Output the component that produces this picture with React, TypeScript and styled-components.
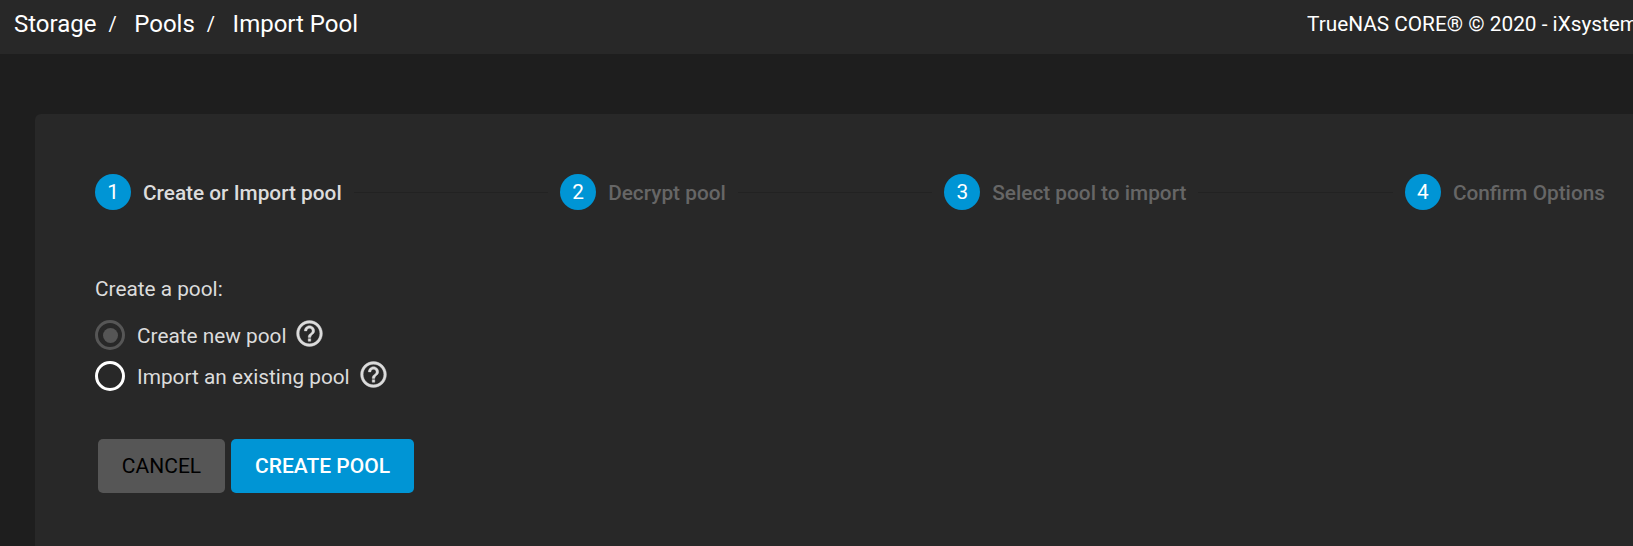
import { Fragment } from "react";
import styled, { createGlobalStyle } from "styled-components";

const GlobalStyle = createGlobalStyle`
  html, body {
    margin: 0;
    height: 100%;
    overflow: hidden;
    background: #1e1e1e;
    font-family: Roboto, "Liberation Sans", sans-serif;
  }
`;

const Page = styled.div`
  width: 1633px;
  height: 546px;
  overflow: hidden;
`;

const TopBar = styled.header`
  height: 54px;
  background: #282828;
  display: flex;
  align-items: center;
  justify-content: space-between;
  padding: 0 0 7px 14px;
  box-sizing: border-box;
  white-space: nowrap;
`;

const Crumbs = styled.nav`
  display: flex;
  align-items: center;
  color: #fff;
  font-size: 24px;
`;

const Slash = styled.span`
  font-size: 20px;
  margin: 0 17.5px 0 12px;
`;

const Copyright = styled.div`
  color: #fff;
  font-size: 20.8px;
  width: 326px;
  overflow: hidden;
`;

const Content = styled.main`
  padding: 60px 0 0 35px;
`;

const Card = styled.section`
  background: #282828;
  border-radius: 6px 0 0 0;
  height: 432px;
  padding: 60px 28px 0 60px;
  box-sizing: border-box;
`;

const Stepper = styled.div`
  display: flex;
  align-items: center;
  gap: 12px;
`;

const StepNumber = styled.div`
  width: 36px;
  height: 36px;
  border-radius: 50%;
  background: #0095d5;
  color: #fff;
  font-size: 20.8px;
  display: flex;
  align-items: center;
  justify-content: center;
  flex: none;
`;

const StepLabel = styled.div<{ $active?: boolean }>`
  font-size: 20.8px;
  font-weight: 500;
  padding-top: 2px;
  color: ${(p) => (p.$active ? "#dcdcdc" : "#666666")};
  white-space: nowrap;
`;

const StepLine = styled.div`
  flex: 1;
  height: 1px;
  background: #222222;
`;

const Question = styled.div`
  margin-top: 67px;
  font-size: 20.8px;
  line-height: 24px;
  color: #dcdcdc;
`;

const RadioList = styled.div`
  margin-top: 19px;
  display: flex;
  flex-direction: column;
  gap: 11px;
`;

const RadioRow = styled.label`
  display: flex;
  align-items: center;
  height: 30px;
  font-size: 20.8px;
  color: #dcdcdc;
`;

const RadioText = styled.span`
  padding-top: 2px;
`;

const RadioRing = styled.span<{ $checked?: boolean }>`
  width: 30px;
  height: 30px;
  box-sizing: border-box;
  border-radius: 50%;
  border: 3px solid ${(p) => (p.$checked ? "#565656" : "#ffffff")};
  margin-right: 12px;
  display: flex;
  align-items: center;
  justify-content: center;

  &::after {
    content: "";
    display: ${(p) => (p.$checked ? "block" : "none")};
    width: 15px;
    height: 15px;
    border-radius: 50%;
    background: #565656;
  }
`;

const HelpSvg = styled.svg`
  width: 31px;
  height: 31px;
  fill: #dcdcdc;
  stroke: #dcdcdc;
  stroke-width: 0.3;
  margin: -4px 0 0 8px;
`;

const Actions = styled.div`
  margin: 48px 0 0 3px;
  display: flex;
  gap: 6px;
`;

const Button = styled.button<{ $primary?: boolean }>`
  height: 54px;
  border: 0;
  border-radius: 5px;
  font-family: inherit;
  font-size: 21px;
  font-weight: ${(p) => (p.$primary ? 500 : 400)};
  color: ${(p) => (p.$primary ? "#ffffff" : "#000000")};
  background: ${(p) => (p.$primary ? "#0095d5" : "#565656")};
  width: ${(p) => (p.$primary ? "183px" : "127px")};
`;

const steps = ["Create or Import pool", "Decrypt pool", "Select pool to import", "Confirm Options"];

function HelpIcon() {
  return (
    <HelpSvg viewBox="0 0 24 24">
      <path d="M11 18h2v-2h-2v2zm1-16C6.48 2 2 6.48 2 12s4.48 10 10 10 10-4.48 10-10S17.52 2 12 2zm0 18c-4.41 0-8-3.59-8-8s3.59-8 8-8 8 3.59 8 8-3.59 8-8 8zm0-14c-2.21 0-4 1.79-4 4h2c0-1.1.9-2 2-2s2 .9 2 2c0 2-3 1.75-3 5h2c0-2.25 3-2.5 3-5 0-2.21-1.79-4-4-4z" />
    </HelpSvg>
  );
}

export default function App() {
  return (
    <Page>
      <GlobalStyle />
      <TopBar>
        <Crumbs>
          Storage<Slash>/</Slash>Pools<Slash>/</Slash>Import Pool
        </Crumbs>
        <Copyright>TrueNAS CORE® © 2020 - iXsystems, Inc</Copyright>
      </TopBar>
      <Content>
        <Card>
          <Stepper>
            {steps.map((label, i) => (
              <Fragment key={label}>
                <StepNumber>{i + 1}</StepNumber>
                <StepLabel $active={i === 0}>{label}</StepLabel>
                {i < steps.length - 1 && <StepLine />}
              </Fragment>
            ))}
          </Stepper>
          <Question>Create a pool:</Question>
          <RadioList>
            <RadioRow>
              <RadioRing $checked />
              <RadioText>Create new pool</RadioText>
              <HelpIcon />
            </RadioRow>
            <RadioRow>
              <RadioRing />
              <RadioText>Import an existing pool</RadioText>
              <HelpIcon />
            </RadioRow>
          </RadioList>
          <Actions>
            <Button>CANCEL</Button>
            <Button $primary>CREATE POOL</Button>
          </Actions>
        </Card>
      </Content>
    </Page>
  );
}
